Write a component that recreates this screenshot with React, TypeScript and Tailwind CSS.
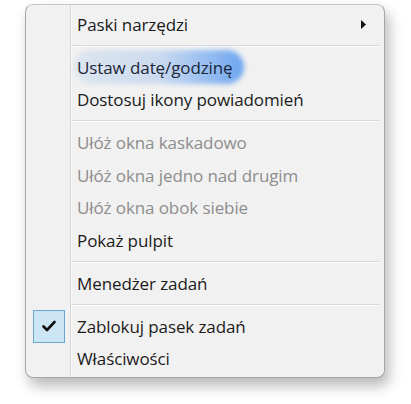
import React from "react";

type Entry =
  | { kind: "item"; label: string; disabled?: boolean; submenu?: boolean; checked?: boolean; hot?: boolean }
  | { kind: "sep" };

const entries: Entry[] = [
  { kind: "item", label: "Paski narzędzi", submenu: true },
  { kind: "sep" },
  { kind: "item", label: "Ustaw datę/godzinę", hot: true },
  { kind: "item", label: "Dostosuj ikony powiadomień" },
  { kind: "sep" },
  { kind: "item", label: "Ułóż okna kaskadowo", disabled: true },
  { kind: "item", label: "Ułóż okna jedno nad drugim", disabled: true },
  { kind: "item", label: "Ułóż okna obok siebie", disabled: true },
  { kind: "item", label: "Pokaż pulpit" },
  { kind: "sep" },
  { kind: "item", label: "Menedżer zadań" },
  { kind: "sep" },
  { kind: "item", label: "Zablokuj pasek zadań", checked: true },
  { kind: "item", label: "Właściwości" },
];

const CheckBox: React.FC = () => (
  <div className="w-[32px] h-[33px] border border-[#6aa6cf] bg-[#cde6f5] flex items-center justify-center">
    <svg width="14" height="12" viewBox="0 0 14 12">
      <path d="M1.5 6.5 L5 10 L12.5 2" fill="none" stroke="#111" strokeWidth="2.6" strokeLinecap="round" strokeLinejoin="round" />
    </svg>
  </div>
);

const MenuRow: React.FC<{ entry: Extract<Entry, { kind: "item" }> }> = ({ entry }) => (
  <div className="relative flex items-center h-[32.5px]">
    <div className="w-[44px] flex justify-center pl-[1px]">{entry.checked && <CheckBox />}</div>
    <div className="w-[7px] self-stretch" />
    {entry.hot && (
      <div className="absolute left-[48px] top-[-1px] w-[170px] h-[34px] rounded-full bg-gradient-to-r from-[#dde5ef] via-[#cbdbef] to-[#6da5f0] blur-[2.5px]" />
    )}
    <span
      className={`relative flex-1 text-[17px] tracking-[-0.1px] ${entry.disabled ? "text-[#8d8d8d]" : entry.hot ? "text-[#1c2638]" : "text-[#1b1b1b]"}`}
    >
      {entry.label}
    </span>
    {entry.submenu && (
      <svg className="mr-[18px]" width="5" height="9" viewBox="0 0 5 9">
        <path d="M0 0 L5 4.5 L0 9 Z" fill="#111" />
      </svg>
    )}
  </div>
);

export default function App() {
  return (
    <div
      className="w-[411px] h-[404px] bg-white pt-[4px] pl-[25px]"
      style={{ fontFamily: '"Open Sans", "Noto Sans", sans-serif' }}
    >
      <div className="relative w-[360px] h-[374px] rounded-[8px] border border-[#a6a6a6] border-t-[#c8c8c8] bg-[#f1f1f1] shadow-[4px_8px_14px_rgba(0,0,0,0.28)] pt-[3px] overflow-hidden">
        <div className="absolute left-[44px] top-0 bottom-0 w-[2px] border-l border-[#d6d6d6] bg-white/60" />
        {entries.map((e, i) =>
          e.kind === "sep" ? (
            <div key={i} className="h-[10.5px] flex items-center pl-[45px] pr-[4px]">
              <div className="flex-1 h-[2px] border-t border-[#d9d9d9] bg-white/70" />
            </div>
          ) : (
            <MenuRow key={i} entry={e} />
          )
        )}
      </div>
    </div>
  );
}
